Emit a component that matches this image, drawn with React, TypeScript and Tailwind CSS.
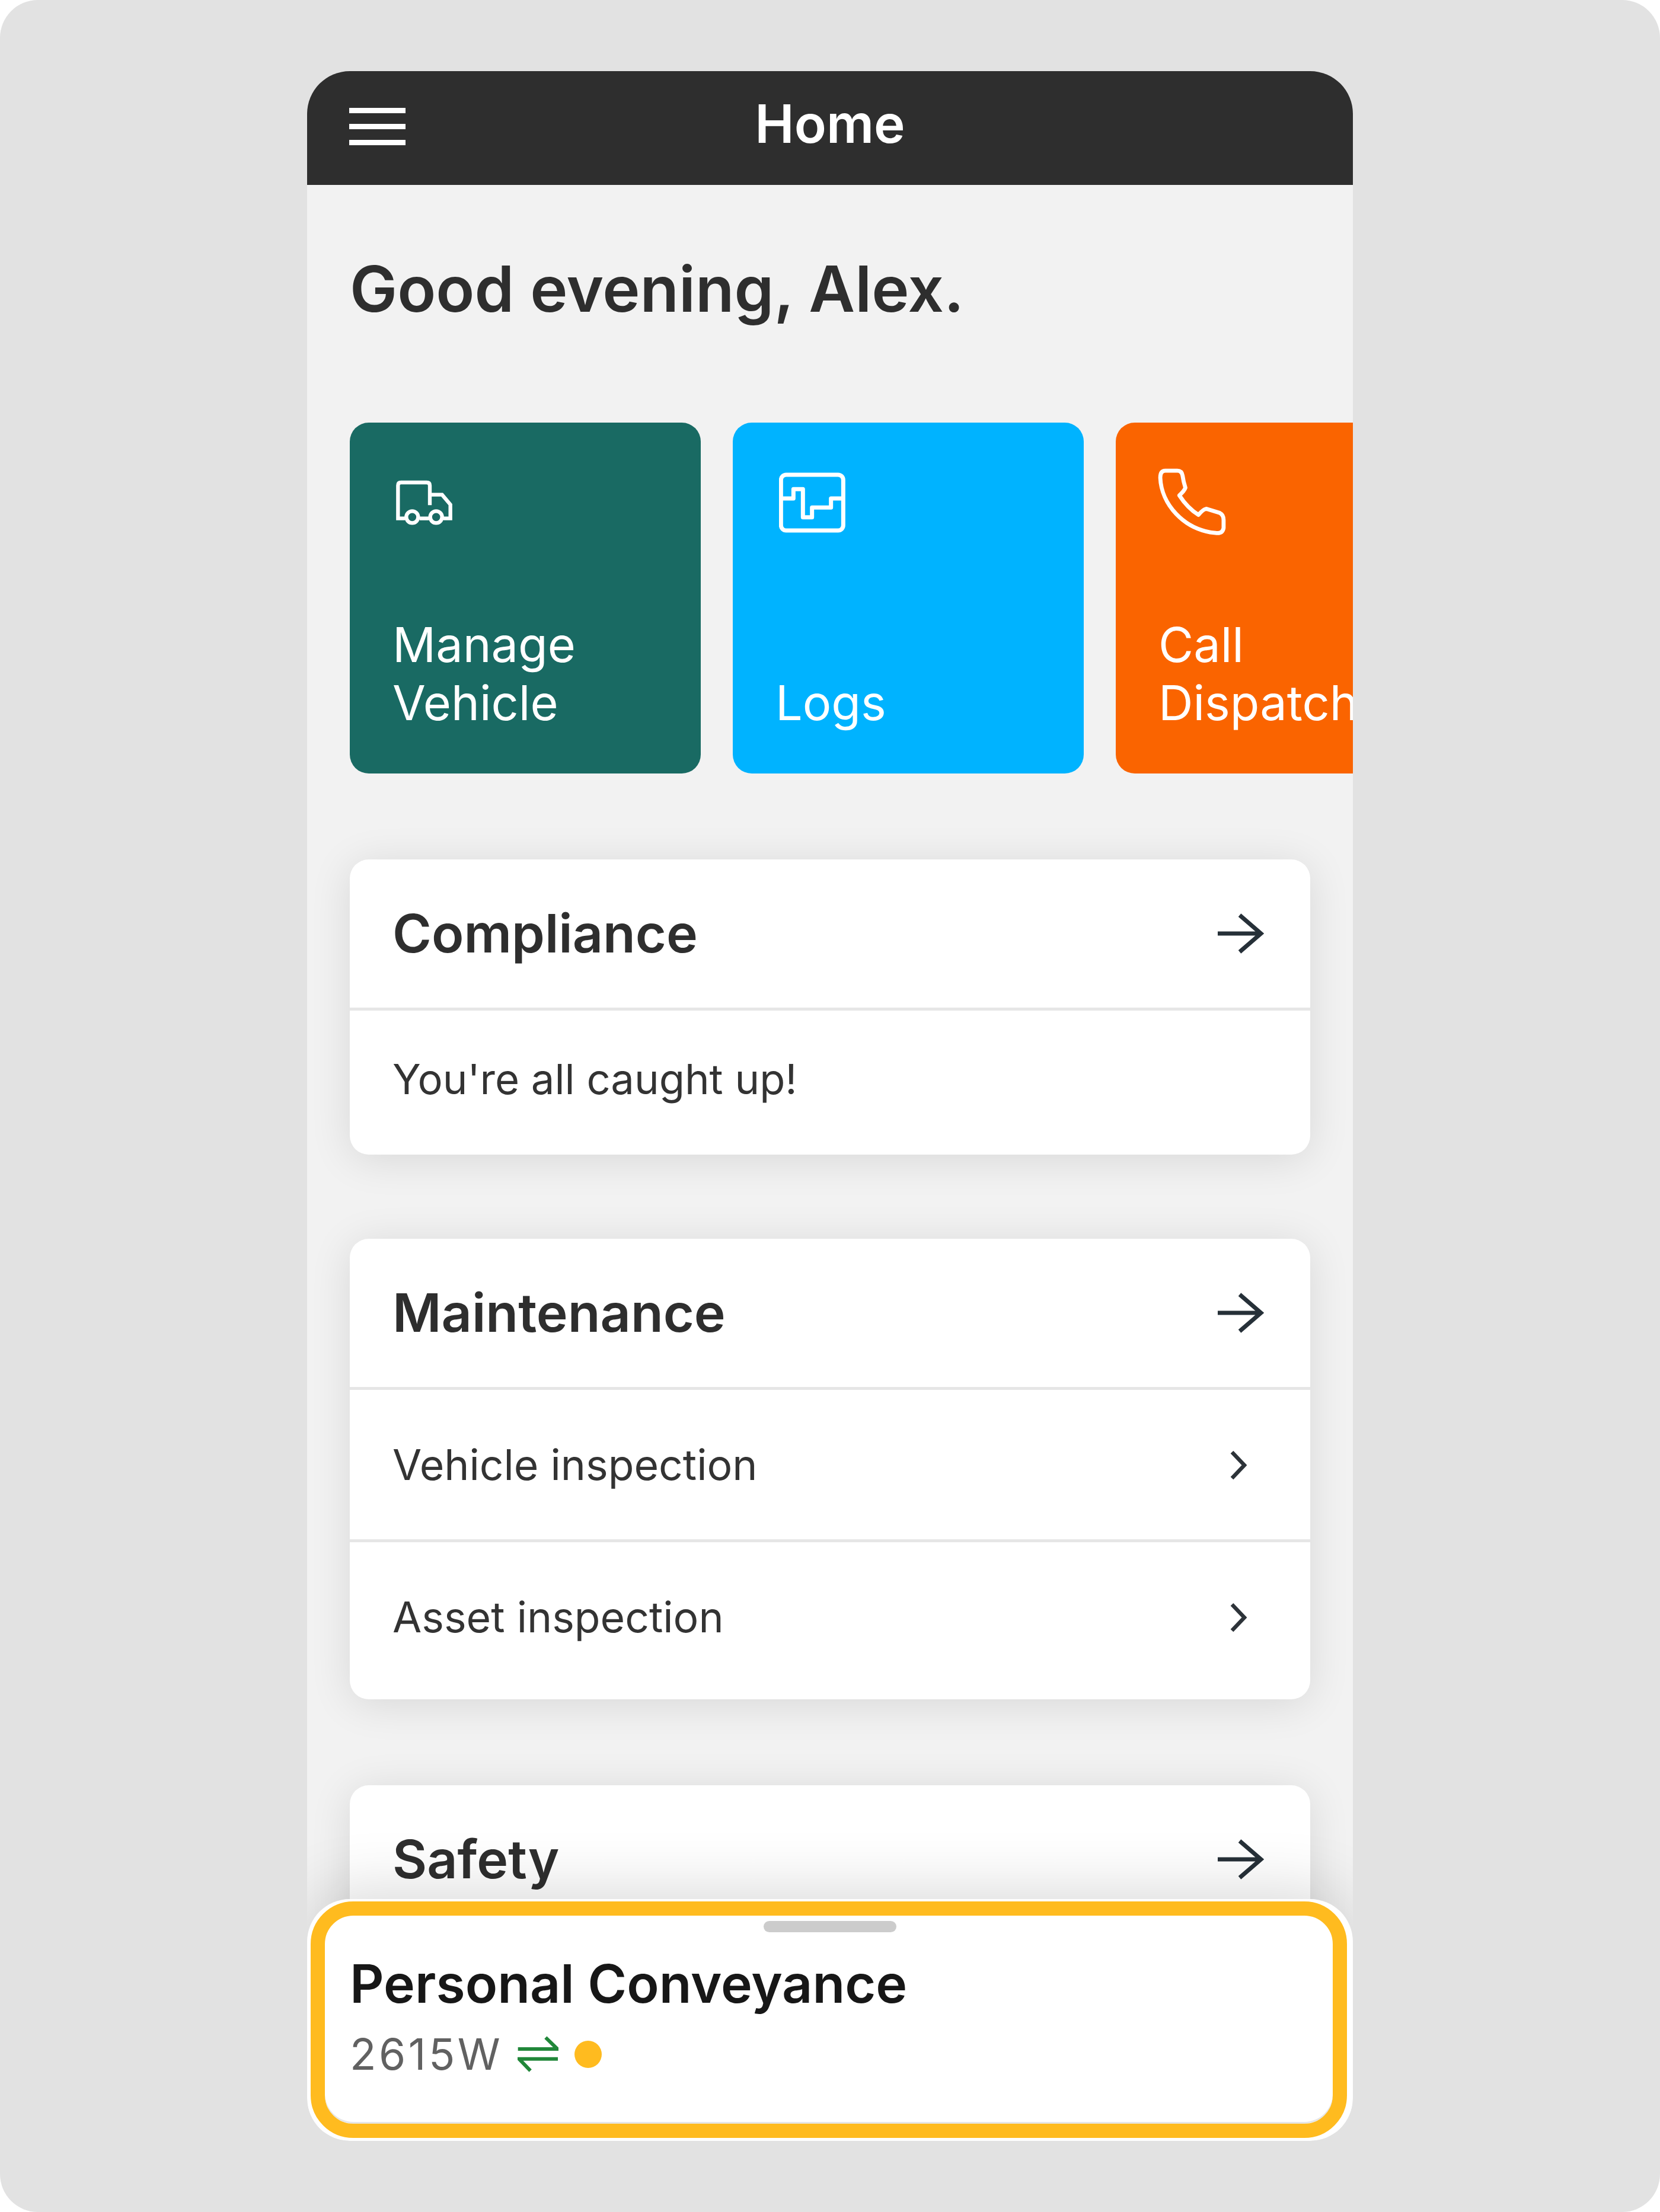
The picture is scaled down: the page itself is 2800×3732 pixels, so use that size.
import React from "react";

const Arrow = () => (
  <svg className="w-[78px] h-[70px] shrink-0" viewBox="2 0 78 70" fill="none" stroke="#263038" strokeWidth="7">
    <path d="M2 35H74M39 4L75 35L39 66" />
  </svg>
);

const Chevron = () => (
  <svg className="w-[30px] h-[50px] shrink-0" viewBox="0 0 30 50" fill="none" stroke="#2d3339" strokeWidth="6.5">
    <path d="M5 3L26 25L5 47" />
  </svg>
);

const Truck = () => (
  <svg className="w-[100px] h-[80px] ml-[78px] mt-[96px]" viewBox="145 155 300 240" fill="none" stroke="#fff" strokeWidth="19">
    <path d="M190 352H155V185Q155 170 170 170H300Q316 170 316 185V285" />
    <path d="M318 232H378L420 282V352H385" />
    <path d="M265 352H312" />
    <circle cx="227" cy="345" r="30" />
    <circle cx="348" cy="345" r="30" />
  </svg>
);

const LogsIcon = () => (
  <svg className="w-[114px] h-[104px] ml-[78px] mt-[84px]" viewBox="105 80 342 312" fill="none" stroke="#fff" strokeWidth="21" strokeLinejoin="round">
    <rect x="115" y="92" width="315" height="282" rx="26" />
    <path d="M115 212H178V165H226V307H272V258H368V212H430" />
  </svg>
);

const PhoneIcon = () => (
  <svg className="w-[118px] h-[118px] ml-[70px] mt-[76px]" viewBox="100 60 348 348" fill="none" stroke="#fff" strokeWidth="20" strokeLinejoin="round">
    <path d="M140 75H200Q222 75 226 100Q230 130 240 160Q235 175 210 198Q250 260 305 295Q330 265 345 265L410 285Q430 295 430 320V360Q425 390 390 385C230 370 120 240 115 110Q115 75 140 75Z" />
  </svg>
);

const Tile = ({ bg, lines, icon }: { bg: string; lines: string[]; icon: React.ReactNode }) => (
  <div className={`relative w-[592px] h-[592px] shrink-0 rounded-[32px] flex flex-col justify-between ${bg}`}>
    <div>{icon}</div>
    <div className="pl-[72px] pb-[70px] text-white text-[81px] leading-[98px] whitespace-nowrap">
      {lines.map((l) => (
        <div key={l}>{l}</div>
      ))}
    </div>
  </div>
);

const CardHeader = ({ title }: { title: string }) => (
  <div className="h-[250px] pl-[72px] pr-[78px] flex items-center justify-between">
    <div className="text-[89.5px] font-semibold text-[#2e2e2e]">{title}</div>
    <Arrow />
  </div>
);

const Row = ({ label, chevron, className, textClass }: { label: string; chevron?: boolean; className: string; textClass: string }) => (
  <div className={`border-t-[5px] border-[#e6e6e6] pl-[72px] pr-[107px] flex items-center justify-between ${className}`}>
    <div className={`text-[#333] ${textClass}`}>{label}</div>
    {chevron && <Chevron />}
  </div>
);

const Card = ({ children, mt }: { children: React.ReactNode; mt: string }) => (
  <div className={`mx-[72px] bg-white rounded-[32px] shadow-[0_8px_70px_rgba(0,0,0,0.11)] ${mt}`}>{children}</div>
);

export default function App() {
  return (
    <div className="w-[2800px] h-[3732px] bg-white" style={{ fontFamily: "Inter, 'Noto Sans', sans-serif" }}>
      <div className="w-full h-full rounded-[64px] bg-[#e2e2e2] pt-[120px] pl-[518px]">
        <div className="relative w-[1764px] h-[3492px] bg-[#f2f2f2] rounded-[72px] overflow-hidden">
          <div className="relative h-[192px] pb-[14px] bg-[#2e2e2e] flex items-center justify-center">
            <div className="absolute left-[71px] top-[62px] w-[95px] flex flex-col gap-[18px]">
              <div className="h-[9px] bg-white" />
              <div className="h-[9px] bg-white" />
              <div className="h-[9px] bg-white" />
            </div>
            <div className="text-white text-[89px] font-semibold">Home</div>
          </div>

          <div className="h-[401px] pl-[72px] pt-[110px] text-[107px] leading-[130px] font-semibold text-[#2e2e2e]">
            Good evening, Alex.
          </div>

          <div className="flex gap-[54px] pl-[72px] overflow-hidden">
            <Tile bg="bg-[#196a63]" lines={["Manage", "Vehicle"]} icon={<Truck />} />
            <Tile bg="bg-[#00b3ff]" lines={["Logs"]} icon={<LogsIcon />} />
            <Tile bg="bg-[#fa6400]" lines={["Call", "Dispatch"]} icon={<PhoneIcon />} />
          </div>

          <Card mt="mt-[145px]">
            <CardHeader title="Compliance" />
            <Row label="You're all caught up!" className="h-[248px] pb-[11px]" textClass="text-[70.5px]" />
          </Card>

          <Card mt="mt-[142px]">
            <CardHeader title="Maintenance" />
            <Row label="Vehicle inspection" chevron className="h-[257px] pt-[2px]" textClass="text-[71.4px]" />
            <Row label="Asset inspection" chevron className="h-[270px] pb-[11px]" textClass="text-[71.4px]" />
          </Card>

          <Card mt="mt-[145px]">
            <CardHeader title="Safety" />
          </Card>

          <div className="absolute left-0 right-0 bottom-0 h-[408px] bg-white rounded-[72px] shadow-[0_-10px_110px_rgba(0,0,0,0.16)]">
            <div className="absolute left-[6px] right-[10px] top-[4px] bottom-[5px] rounded-[72px] border-[24px] border-[#ffbb1f] pl-[42px] shadow-[inset_0_-3px_0_#e6e6e6]">
              <div className="absolute left-[740px] top-[9px] w-[224px] h-[19px] rounded-full bg-[#cccccc]" />
              <div className="pt-[60px] text-[89.5px] leading-[110px] font-semibold text-[#171717]">Personal Conveyance</div>
              <div className="mt-[14px] flex items-center">
                <div className="text-[73px] leading-[100px] tracking-[4.5px] text-[#616161]">2615W</div>
                <svg className="ml-[25px] w-[69px] h-[64px]" viewBox="938 252 207 186" fill="none" stroke="#218739" strokeWidth="18">
                  <path d="M940 318H1140L1080 260" />
                  <path d="M1142 368H945L1003 428" />
                </svg>
                <div className="ml-[27px] w-[46px] h-[46px] rounded-full bg-[#ffbb1f]" />
              </div>
            </div>
          </div>
        </div>
      </div>
    </div>
  );
}
